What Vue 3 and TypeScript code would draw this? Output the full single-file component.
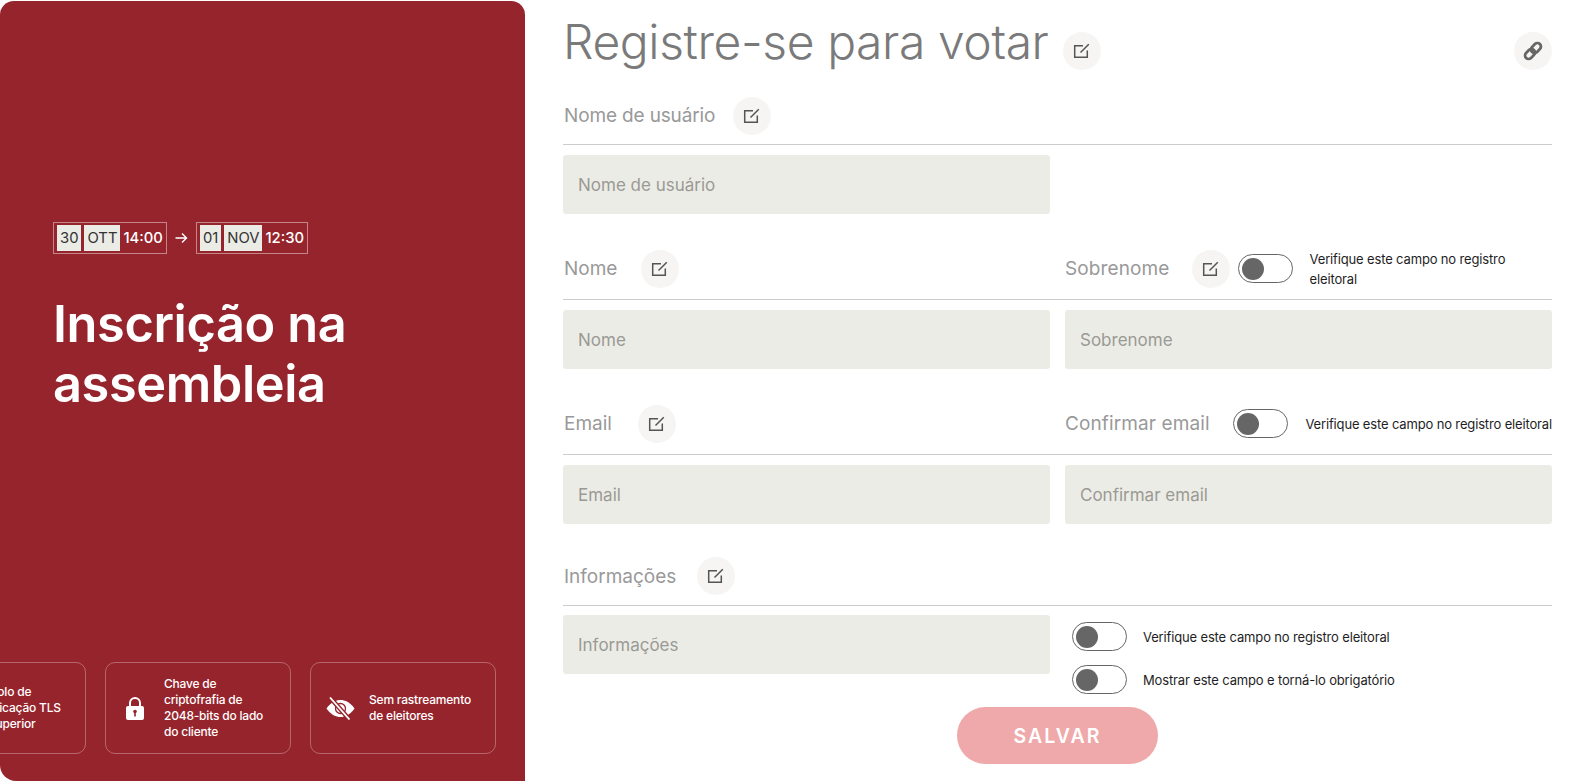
<script setup lang="ts">
const editBox = 'M10 3.700H1.700v11.600h12.600V8.500'
const editPen = 'M7.500 10.500 15.800 2.200'

const badges = [
  { cls: 'tls', lines: ['Protocolo de', 'comunicação TLS', '1.2 e superior'], icon: 'none' },
  { cls: 'key', lines: ['Chave de', 'criptofrafia de', '2048-bits do lado', 'do cliente'], icon: 'lock' },
  { cls: 'track', lines: ['Sem rastreamento', 'de eleitores'], icon: 'eye' }
]
</script>

<template>
  <div class="page">
    <aside class="panel">
      <div class="panel-main">
        <div class="dates">
          <div class="date">
            <span class="chip">30</span><span class="chip">OTT</span><span class="time">14:00</span>
          </div>
          <svg class="arrow" width="13" height="12" viewBox="0 0 13 12" fill="none" stroke="#fff" stroke-width="1.4">
            <path d="M.5 6h11M7 1.500 11.500 6 7 10.500" />
          </svg>
          <div class="date">
            <span class="chip">01</span><span class="chip">NOV</span><span class="time">12:30</span>
          </div>
        </div>
        <h1>Inscrição na assembleia</h1>
      </div>
      <div class="badges">
        <div v-for="b in badges" :key="b.cls" class="badge" :class="b.cls">
          <svg v-if="b.icon === 'lock'" class="badge-icon" width="18" height="23" viewBox="0 0 18 23">
            <path fill="none" stroke="#fff" stroke-width="2" d="M4 10V6a5 5 0 0 1 10 0v4" />
            <rect x="0" y="9" width="18" height="14" rx="2" fill="#fff" />
            <circle cx="9" cy="14.500" r="1.800" fill="#96242c" />
            <rect x="8.200" y="15" width="1.600" height="4.500" fill="#96242c" />
          </svg>
          <svg v-if="b.icon === 'eye'" class="badge-icon" width="29" height="23" viewBox="0 0 29 23">
            <path fill="#fff" d="M.5 11.500C5 5 10 3 14.500 3S24 5 28.500 11.500C24 18 19 20 14.500 20S5 18 .5 11.500z" />
            <circle cx="14.500" cy="11.500" r="5" fill="none" stroke="#96242c" stroke-width="1.300" />
            <path stroke="#96242c" stroke-width="4.500" d="M4 .5 23.500 22.500" />
            <path stroke="#fff" stroke-width="1.800" d="M4 .5 23.500 22.500" />
          </svg>
          <p><span v-for="l in b.lines" :key="l">{{ l }}</span></p>
        </div>
      </div>
    </aside>

    <main class="content">
      <header class="title-row">
        <h2>Registre-se para votar</h2>
        <button class="round-btn" type="button">
          <svg width="18" height="18" viewBox="0 0 18 18" fill="none" stroke="#555" stroke-width="1.500"><path :d="editBox" /><path :d="editPen" /></svg>
        </button>
        <button class="round-btn link-btn" type="button">
          <svg width="20" height="20" viewBox="0 0 20 20" fill="none" stroke="#666" stroke-width="2.800">
            <rect x="1.500" y="9.500" width="11" height="7" rx="3.500" transform="rotate(-45 7 13)" />
            <rect x="7.500" y="3.500" width="11" height="7" rx="3.500" transform="rotate(-45 13 7)" />
          </svg>
        </button>
      </header>

      <section class="row">
        <div class="heads">
          <div class="head">
            <label class="user">Nome de usuário</label>
            <button class="round-btn gap-user" type="button">
              <svg width="18" height="18" viewBox="0 0 18 18" fill="none" stroke="#555" stroke-width="1.500"><path :d="editBox" /><path :d="editPen" /></svg>
            </button>
          </div>
        </div>
        <div class="inputs"><input placeholder="Nome de usuário" /></div>
      </section>

      <section class="row spaced">
        <div class="heads">
          <div class="head">
            <label>Nome</label>
            <button class="round-btn gap-name" type="button">
              <svg width="18" height="18" viewBox="0 0 18 18" fill="none" stroke="#555" stroke-width="1.500"><path :d="editBox" /><path :d="editPen" /></svg>
            </button>
          </div>
          <div class="head">
            <label class="right">Sobrenome</label>
            <button class="round-btn gap-sur" type="button">
              <svg width="18" height="18" viewBox="0 0 18 18" fill="none" stroke="#555" stroke-width="1.500"><path :d="editBox" /><path :d="editPen" /></svg>
            </button>
            <span class="toggle t-after"><i /></span>
            <span class="hint wrap">Verifique este campo no registro eleitoral</span>
          </div>
        </div>
        <div class="inputs">
          <input placeholder="Nome" />
          <input placeholder="Sobrenome" />
        </div>
      </section>

      <section class="row spaced">
        <div class="heads">
          <div class="head">
            <label>Email</label>
            <button class="round-btn gap-email" type="button">
              <svg width="18" height="18" viewBox="0 0 18 18" fill="none" stroke="#555" stroke-width="1.500"><path :d="editBox" /><path :d="editPen" /></svg>
            </button>
          </div>
          <div class="head">
            <label class="right">Confirmar email</label>
            <span class="toggle t-conf"><i /></span>
            <span class="hint">Verifique este campo no registro eleitoral</span>
          </div>
        </div>
        <div class="inputs">
          <input placeholder="Email" />
          <input placeholder="Confirmar email" />
        </div>
      </section>

      <section class="row info">
        <div class="heads">
          <div class="head">
            <label>Informações</label>
            <button class="round-btn gap-info" type="button">
              <svg width="18" height="18" viewBox="0 0 18 18" fill="none" stroke="#555" stroke-width="1.500"><path :d="editBox" /><path :d="editPen" /></svg>
            </button>
          </div>
        </div>
        <div class="info-body">
          <input placeholder="Informações" />
          <div class="options">
            <div class="option"><span class="toggle"><i /></span><span class="hint">Verifique este campo no registro eleitoral</span></div>
            <div class="option"><span class="toggle"><i /></span><span class="hint">Mostrar este campo e torná-lo obrigatório</span></div>
          </div>
        </div>
      </section>

      <div class="actions"><button class="save" type="button">SALVAR</button></div>
    </main>
  </div>
</template>

<style scoped>
.page {
  display: flex;
  width: 1578px;
  height: 781px;
  overflow: hidden;
  background: #fff;
  font-family: Inter, "Liberation Sans", sans-serif;
}
.panel {
  flex: 0 0 525px;
  height: 780px;
  margin-top: 1px;
  display: flex;
  flex-direction: column;
  background: #96242c;
  border-radius: 14px 14px 0 16px;
  color: #fff;
  overflow: hidden;
}
.panel-main {
  flex: 1;
  padding: 221px 0 0 53px;
}
.dates {
  display: flex;
  align-items: center;
  gap: 8px;
}
.date {
  display: flex;
  height: 32px;
  padding: 2px 3px;
  box-sizing: border-box;
  border: 1px solid rgba(255, 255, 255, 0.45);
  font-size: 14.800px;
  align-items: stretch;
}
.chip {
  display: flex;
  align-items: center;
  padding: 0 3px;
  margin-right: 3px;
  background: #ecece7;
  color: #333;
}
.time {
  display: flex;
  align-items: center;
  font-weight: 500;
}
h1 {
  width: 340px;
  margin: 40px 0 0;
  font-size: 50.500px;
  line-height: 60px;
  font-weight: 600;
  letter-spacing: -0.4px;
}
.badges {
  display: flex;
  gap: 19px;
  margin-left: -100px;
  padding-bottom: 27px;
  height: 92px;
}
.badge {
  flex: 0 0 186px;
  box-sizing: border-box;
  display: flex;
  align-items: center;
  border: 1px solid rgba(255, 255, 255, 0.3);
  border-radius: 10px;
}
.tls {
  padding-left: 60px;
}
.key {
  padding-left: 20px;
  gap: 20px;
}
.track {
  padding-left: 15px;
  gap: 14px;
}
.badge p {
  margin: 0;
  display: flex;
  flex-direction: column;
  font-size: 12px;
  line-height: 16px;
  font-weight: 500;
  letter-spacing: -0.2px;
  white-space: nowrap;
}
.badge-icon {
  flex: none;
}
.content {
  flex: 1;
  padding: 0 26px 0 38px;
  min-width: 0;
}
.title-row {
  display: flex;
  align-items: flex-start;
  height: 89px;
}
h2 {
  margin: 13px 15px 0 0;
  font-size: 48px;
  line-height: 58px;
  font-weight: 300;
  color: #7a7a7a;
  letter-spacing: -0.4px;
}
.title-row .round-btn {
  margin-top: 32px;
}
.round-btn {
  flex: none;
  display: flex;
  align-items: center;
  justify-content: center;
  width: 38px;
  height: 38px;
  padding: 0;
  border: 0;
  border-radius: 50%;
  background: #f6f5f3;
}
.title-row .link-btn {
  margin-left: auto;
}
.heads {
  display: grid;
  grid-template-columns: 1fr 1fr;
  column-gap: 15px;
  height: 56px;
  padding-bottom: 2px;
  box-sizing: border-box;
  border-bottom: 1px solid #ccc;
}
.head {
  display: flex;
  align-items: center;
}
.inputs {
  display: grid;
  grid-template-columns: 1fr 1fr;
  column-gap: 15px;
  margin-top: 10px;
}
.spaced {
  margin-top: 30px;
}
.spaced .heads {
  padding-bottom: 6px;
}
.info {
  margin-top: 26px;
}
.info .heads {
  padding-bottom: 3px;
}
label {
  padding-left: 1px;
  font-size: 19px;
  color: #999;
  white-space: nowrap;
}
label.user {
  letter-spacing: -0.15px;
}
label.right {
  padding-left: 0;
  letter-spacing: 0.12px;
}
.gap-user { margin-left: 18px; }
.gap-name { margin-left: 24px; }
.gap-sur { margin-left: 22px; }
.gap-email { margin-left: 26px; }
.gap-info { margin-left: 21px; }
input {
  display: block;
  width: 100%;
  height: 59px;
  box-sizing: border-box;
  padding: 0 15px;
  border: 0;
  border-radius: 3px;
  background: #ecece7;
  font: 400 17px Inter, "Liberation Sans", sans-serif;
  outline: none;
}
input::placeholder {
  color: #9a9a94;
}
.toggle {
  flex: none;
  display: flex;
  align-items: center;
  width: 55px;
  height: 29px;
  padding-left: 3px;
  box-sizing: border-box;
  border: 1px solid #666;
  border-radius: 15px;
}
.toggle i {
  display: block;
  width: 22px;
  height: 22px;
  border-radius: 50%;
  background: #666;
}
.t-after {
  margin-left: 8px;
}
.t-conf {
  margin-left: 23px;
}
.hint {
  margin-left: auto;
  font-size: 13px;
  color: #1e1e24;
  letter-spacing: -0.15px;
  white-space: nowrap;
}
.hint.wrap {
  width: 215px;
  white-space: normal;
  line-height: 20px;
  margin-left: 17px;
}
.info-body {
  display: flex;
  gap: 22px;
  margin-top: 9px;
}
.info-body input {
  flex: 0 0 487px;
  width: 487px;
}
.options {
  display: flex;
  flex-direction: column;
  gap: 14px;
  padding-top: 7px;
}
.option {
  display: flex;
  align-items: center;
  gap: 16px;
}
.option .hint {
  margin-left: 0;
}
.actions {
  display: flex;
  justify-content: center;
  margin-top: 13px;
}
.save {
  width: 201px;
  height: 57px;
  border: 0;
  border-radius: 29px;
  background: #efa9aa;
  color: #fff;
  font: 600 19.500px Inter, "Liberation Sans", sans-serif;
  letter-spacing: 2px;
}
</style>

<style>
body {
  margin: 0;
  background: #fff;
}
</style>
